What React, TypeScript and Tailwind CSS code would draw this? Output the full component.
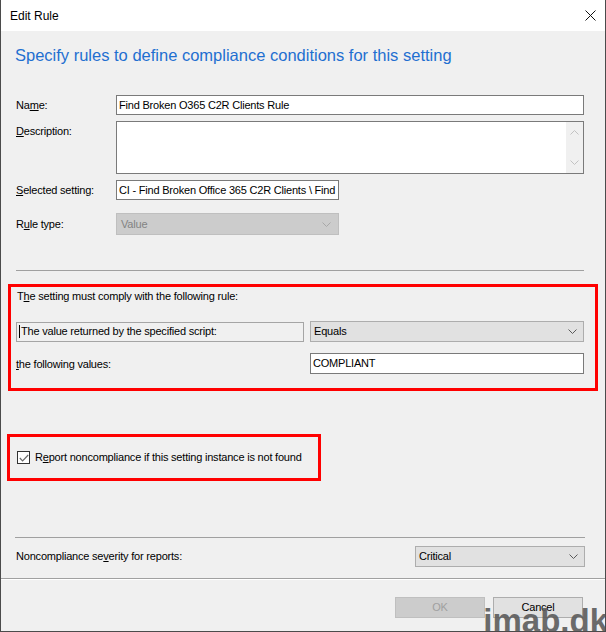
import type { ReactNode } from "react";

type TChevronProps = {
  color: string;
  up?: boolean;
};

const Chevron = ({ color, up }: TChevronProps) => (
  <svg width="9" height="5" viewBox="0 0 9 5" className="shrink-0">
    <path
      d={up ? "M0.5 4.5 L4.5 0.5 L8.5 4.5" : "M0.5 0.5 L4.5 4.5 L8.5 0.5"}
      stroke={color}
      strokeWidth="1"
      fill="none"
    />
  </svg>
);

const Label = ({ children, className }: { children: ReactNode; className?: string }) => (
  <div className={`shrink-0 whitespace-nowrap leading-[16px] ${className ?? ""}`}>{children}</div>
);

const TextBox = ({ value, className }: { value: string; className?: string }) => (
  <div
    className={`flex h-[20px] items-center overflow-hidden whitespace-nowrap border border-[#7a7a7a] bg-white pl-[2px] ${className ?? ""}`}
  >
    {value}
  </div>
);

const Select = ({ value, className }: { value: string; className?: string }) => (
  <div
    className={`flex h-[21px] items-center justify-between border border-[#adadad] bg-[#e1e1e1] pl-[3px] pr-[6px] ${className ?? ""}`}
  >
    <span>{value}</span>
    <Chevron color="#5a5a5a" />
  </div>
);

export default function App() {
  return (
    <div className="relative h-[632px] w-[606px] overflow-hidden border-b border-l border-r border-[#4b4b4b] bg-[#f0f0f0] font-['Liberation_Sans',sans-serif] text-[11px] tracking-[-0.2px] text-black">
      {/* title bar */}
      <div className="flex h-[31px] items-center justify-between bg-white pl-[9px] pr-[9px] text-[12px] tracking-normal">
        <span>Edit Rule</span>
        <svg width="11" height="11" viewBox="0 0 11 11">
          <path d="M0.5 0.5 L10.5 10.5 M10.5 0.5 L0.5 10.5" stroke="#111" strokeWidth="1" />
        </svg>
      </div>

      <h1 className="ml-[14px] mt-[14px] h-[20px] text-[16.5px] leading-[20px] tracking-normal text-[#1f6fd0]">
        Specify rules to define compliance conditions for this setting
      </h1>

      {/* name */}
      <div className="ml-[15px] mt-[30px] flex h-[20px] items-center">
        <Label className="w-[100px]">
          Na<u>m</u>e:
        </Label>
        <TextBox value="Find Broken O365 C2R Clients Rule" className="w-[468px]" />
      </div>

      {/* description */}
      <div className="ml-[15px] mt-[6px] flex h-[53px] items-start">
        <Label className="mt-[2px] w-[100px]">
          <u>D</u>escription:
        </Label>
        <div className="flex h-[53px] w-[468px] justify-end border border-[#7a7a7a] bg-white">
          <div className="flex h-full w-[17px] flex-col items-center justify-between bg-[#f0f0f0] py-[8px]">
            <Chevron color="#c2c2c2" up />
            <Chevron color="#c2c2c2" />
          </div>
        </div>
      </div>

      {/* selected setting */}
      <div className="ml-[15px] mt-[6px] flex h-[20px] items-center">
        <Label className="w-[100px]">
          <u>S</u>elected setting:
        </Label>
        <TextBox
          value="CI - Find Broken Office 365 C2R Clients \ Find Broken O365 C2R Clients"
          className="w-[223px] border-[#3c3c3c]"
        />
      </div>

      {/* rule type */}
      <div className="ml-[15px] mt-[13px] flex h-[22px] items-center">
        <Label className="w-[100px]">
          R<u>u</u>le type:
        </Label>
        <div className="flex h-[22px] w-[223px] items-center justify-between border border-[#bfbfbf] bg-[#cccccc] pl-[4px] pr-[7px] text-[#838383]">
          <span>Value</span>
          <Chevron color="#a8a8a8" />
        </div>
      </div>

      <div className="ml-[15px] mt-[35px] h-[1px] w-[568px] bg-[#a0a0a0]" />

      {/* rule box */}
      <div className="ml-[7px] mt-[13px] h-[107px] w-[590px] border-[3px] border-[#ff0000]">
        <Label className="ml-[6px] mt-[1px]">
          T<u>h</u>e setting must comply with the following rule:
        </Label>
        <div className="mt-[17px] flex h-[21px] items-center">
          <div className="ml-[5px] flex h-[20px] w-[288px] items-center whitespace-nowrap border border-[#a5a5a5] bg-[#f0f0f0] pl-[2px]">
            <span className="mr-[1px] h-[13px] w-[1px] bg-black" />
            The value returned by the specified script:
          </div>
          <Select value="Equals" className="ml-[6px] w-[274px]" />
        </div>
        <div className="mt-[11px] flex h-[21px] items-center">
          <Label className="ml-[5px] w-[294px]">
            <u>t</u>he following values:
          </Label>
          <TextBox value="COMPLIANT" className="h-[21px] w-[274px]" />
        </div>
      </div>

      {/* checkbox box */}
      <div className="ml-[6px] mt-[43px] flex h-[47px] w-[314px] items-center border-[3px] border-[#ff0000]">
        <div className="ml-[7px] flex h-[13px] w-[13px] shrink-0 items-center justify-center border border-[#333333] bg-white">
          <svg width="10" height="8" viewBox="0 0 10 8">
            <path d="M0.8 4 L3.6 6.8 L9.2 1" stroke="#6a6a6a" strokeWidth="1.2" fill="none" />
          </svg>
        </div>
        <span className="ml-[5px] whitespace-nowrap">
          R<u>e</u>port noncompliance if this setting instance is not found
        </span>
      </div>

      <div className="ml-[14px] mt-[56px] h-[1px] w-[570px] bg-[#a0a0a0]" />

      {/* severity */}
      <div className="ml-[15px] mt-[8px] flex h-[20px] items-center">
        <Label className="w-[399px]">
          Noncompliance se<u>v</u>erity for reports:
        </Label>
        <Select value="Critical" className="h-[20px] w-[170px]" />
      </div>

      <div className="mt-[12px] h-[2px] border-b border-t border-b-white border-t-[#a0a0a0]" />

      {/* buttons */}
      <div className="mt-[17px] flex justify-end gap-[8px] pr-[22px]">
        <div className="flex h-[21px] w-[90px] items-center justify-center border border-[#bfbfbf] bg-[#cccccc] text-[#a0a0a0]">
          OK
        </div>
        <div className="flex h-[21px] w-[90px] items-center justify-center border border-[#adadad] bg-[#e1e1e1]">
          Cancel
        </div>
      </div>

      {/* watermark */}
      <div className="pointer-events-none absolute right-[-3px] top-[604px] font-['Liberation_Sans',sans-serif] text-[33px] font-bold leading-[33px] tracking-normal text-[#5c5c5c] opacity-90">
        imab.dk
      </div>
    </div>
  );
}
